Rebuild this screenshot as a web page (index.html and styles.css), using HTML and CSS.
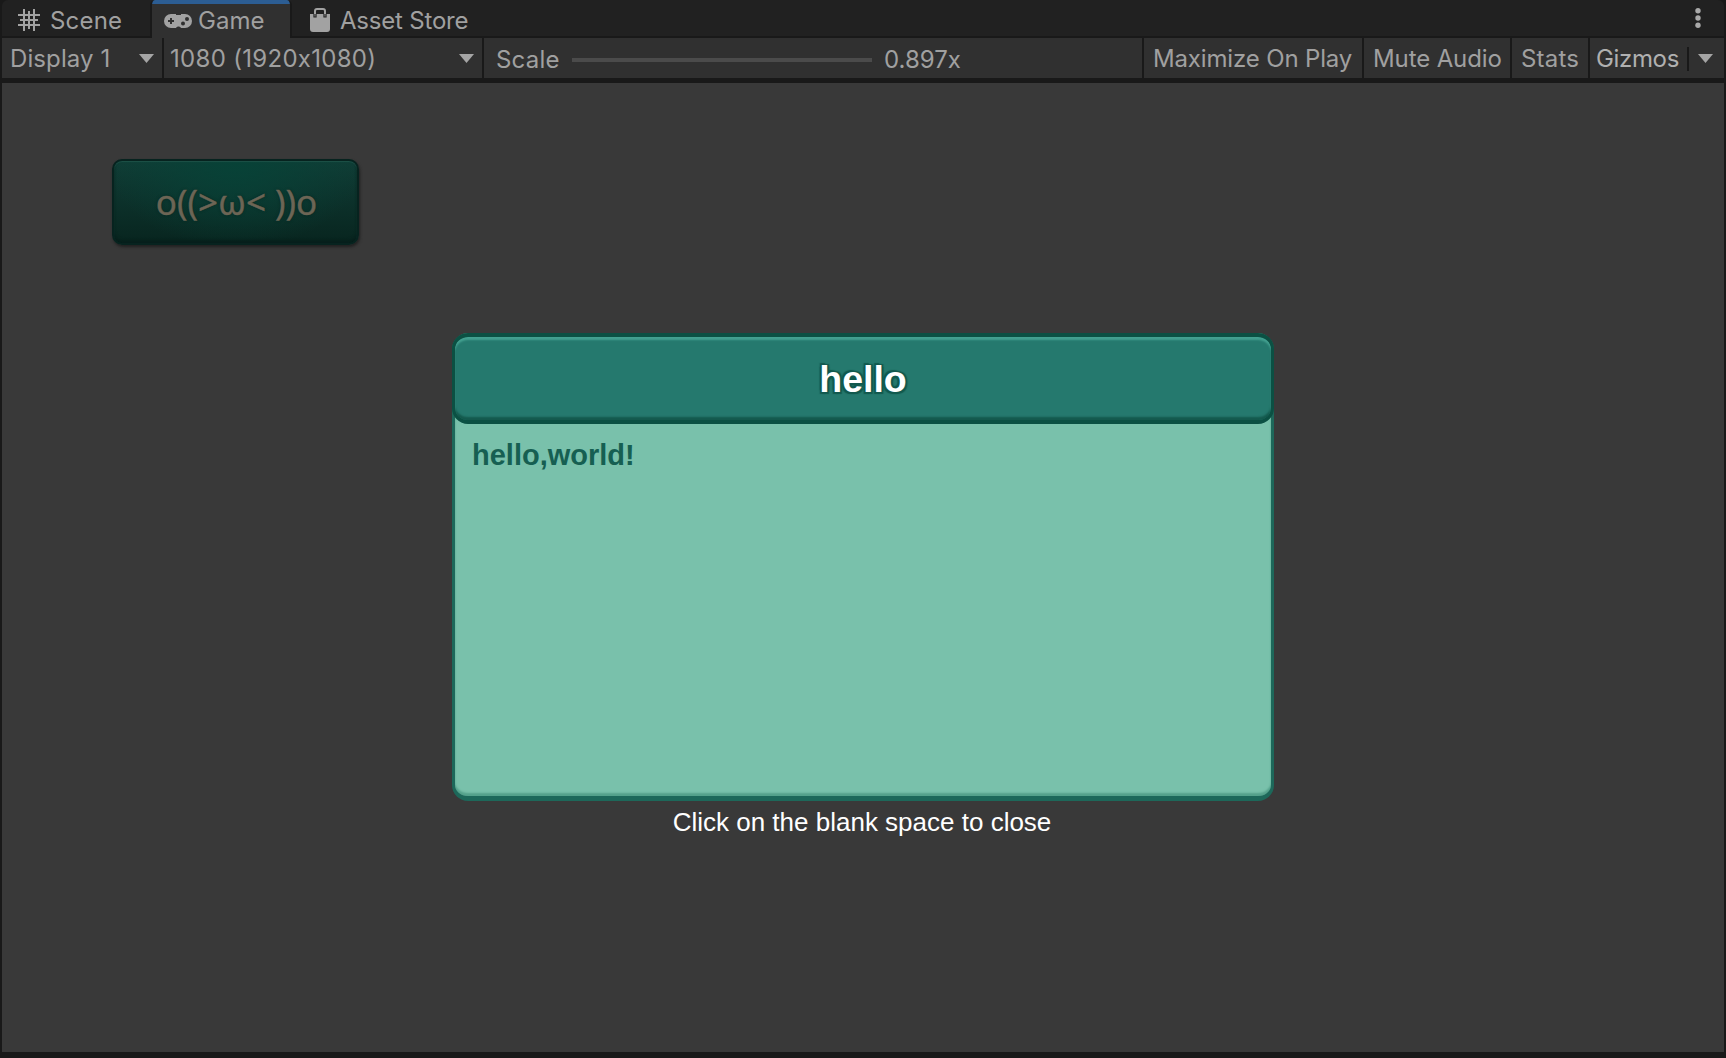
FILE: index.html
```html
<!DOCTYPE html>
<html lang="en">
<head>
<meta charset="utf-8">
<title>Game</title>
<link rel="stylesheet" href="styles.css">
</head>
<body>
<div class="editor">
  <nav class="tabs">
    <div class="tab scene">
      <svg class="icon" width="22" height="22" viewBox="0 0 22 22" fill="none" stroke="#a2a2a2" stroke-width="2"><path d="M6 0v22M11 2v18M16 0v22M0 6h22M2 11h18M0 16h22"/></svg>
      <span>Scene</span>
    </div>
    <div class="tab game active">
      <svg class="icon" width="28" height="14" viewBox="0 0 28 14"><rect width="28" height="14" rx="7" fill="#a2a2a2"/><path d="M12 0h5v1h-5zM12 14c1-2 4-2 5 0z" fill="#303030"/><path d="M7 4v6M4 7h6" stroke="#303030" stroke-width="2"/><circle cx="23" cy="5" r="2" fill="#303030"/><circle cx="19" cy="9.500" r="2" fill="#303030"/></svg>
      <span>Game</span>
    </div>
    <div class="tab store">
      <svg class="icon" width="20" height="24" viewBox="0 0 20 24"><path d="M0 6h20v15a3 3 0 0 1-3 3H3a3 3 0 0 1-3-3z" fill="#a2a2a2"/><path d="M5 6V3q0-2 2-2h6q2 0 2 2v3" fill="none" stroke="#a2a2a2" stroke-width="2"/><path d="M4 6v3h2V6M14 6v3h2V6" fill="none" stroke="#212121" stroke-width="1.200"/></svg>
      <span>Asset Store</span>
    </div>
    <svg class="more" width="6" height="20" viewBox="0 0 6 20" fill="#a9a9a9"><circle cx="3" cy="2.700" r="2.700"/><circle cx="3" cy="10" r="2.700"/><circle cx="3" cy="17.300" r="2.700"/></svg>
  </nav>
  <div class="toolbar">
    <div class="cell display"><span>Display 1</span><i class="arrow"></i></div>
    <div class="cell resolution"><span>1080 (1920x1080)</span><i class="arrow"></i></div>
    <div class="cell scale"><span class="label">Scale</span><i class="slider"></i><span class="value">0.897x</span></div>
    <div class="cell maximize"><span>Maximize On Play</span></div>
    <div class="cell mute"><span>Mute Audio</span></div>
    <div class="cell stats"><span>Stats</span></div>
    <div class="cell gizmos"><span>Gizmos</span><i class="divider"></i><i class="arrow"></i></div>
  </div>
  <main class="view">
    <button class="face">o((&gt;ω&lt; ))o</button>
    <section class="dialog">
      <h1 class="title">hello</h1>
      <p class="message">hello,world!</p>
    </section>
    <p class="hint">Click on the blank space to close</p>
  </main>
</div>
</body>
</html>
```
FILE: styles.css
```css
* { box-sizing: border-box; }
body {
  margin: 0;
  background: #191919;
  font: 400 24px/30px Inter, sans-serif;
  font-feature-settings: "calt" 0;
  color: #a0a0a0;
}
.editor {
  height: 1058px;
  padding: 0 2px 6px;
  display: flex;
  flex-direction: column;
  overflow: hidden;
}
span { white-space: nowrap; }
.tabs {
  height: 36px;
  display: flex;
  background: #212121;
  border-radius: 6px 6px 0 0;
}
.tab { display: flex; align-items: center; padding-top: 5px; }
.icon { flex: none; }
.scene { width: 148px; padding-left: 16px; gap: 10px; letter-spacing: 0.2px; }
.scene .icon { margin-top: -2px; }
.game { width: 142px; padding-left: 12px; gap: 6px; }
.active {
  height: 38px;
  background: #303030;
  border: solid #191919;
  border-width: 0 2px;
  background-image: linear-gradient(#2c5d93 4px, transparent 4px);
  border-radius: 5px 5px 0 0;
  padding-top: 6px;
  padding-bottom: 2px;
}
.store { padding-left: 18px; gap: 10px; letter-spacing: -0.2px; }
.store .icon { margin-top: -1px; }
.more { margin: 8px 23px 0 auto; }
.toolbar { height: 40px; margin-top: 2px; display: flex; background: #303030; flex: none; }
.cell {
  display: flex;
  align-items: center;
  padding-top: 2px;
  border-right: 2px solid #191919;
}
.arrow {
  width: 15px;
  height: 9px;
  margin-top: -1px;
  background: #a5a5a5;
  clip-path: polygon(0 0, 100% 0, 50% 100%);
}
.display { width: 162px; padding-right: 8px; padding-left: 8px; justify-content: space-between; letter-spacing: 0.1px; }
.resolution { width: 320px; padding-right: 8px; padding-left: 6px; justify-content: space-between; letter-spacing: 0.3px; }
.scale { width: 660px; padding-top: 3px; padding-left: 12px; }
.label { width: 76px; letter-spacing: 0.2px; }
.slider { width: 300px; height: 4px; background: #4b4b4b; }
.value { margin-left: 12px; }
.maximize { width: 220px; padding-left: 9px; letter-spacing: -0.15px; }
.mute { width: 148px; padding-left: 9px; letter-spacing: -0.12px; }
.stats { width: 78px; padding-left: 9px; letter-spacing: 0.2px; }
.gizmos { flex: 1; padding-left: 6px; border: 0; color: #b0b0b0; letter-spacing: -0.35px; }
.divider { width: 2px; height: 24px; margin: 0 9px 0 auto; background: #191919; }
.gizmos .arrow { margin-right: 11px; }
.view {
  height: 969px;
  margin-top: 5px;
  background: #393939;
  display: flex;
  flex-direction: column;
}
.face {
  width: 247px;
  height: 86px;
  margin: 76px 0 0 110px;
  padding: 0 0 1px 2px;
  border: 2px solid #07231f;
  border-radius: 10px;
  background: radial-gradient(ellipse at 50% 0, #074237, transparent 75%), linear-gradient(#103d36, #08251f);
  box-shadow: inset 0 1px 1px #1d5148, inset 0 -3px 3px #061f1b, 1px 2px 3px #202020;
  font: 35px/1 "Noto Sans", sans-serif;
  color: #6c6555;
  -webkit-text-stroke: 0.4px #6c6555;
  text-shadow: 0 0 3px #06251f;
}
.dialog {
  width: 822px;
  height: 468px;
  margin: 88px 0 0 450px;
  border: solid #1d685a;
  border-width: 0 3px 5px;
  border-radius: 16px;
  background: #79c1ab;
  box-shadow: inset 0 -3px 2px #54a18b;
}
.title {
  height: 91px;
  margin: 0 -3px;
  border: solid #0b5043;
  border-width: 4px 3px;
  border-radius: 16px;
  background: #25796e;
  box-shadow: inset 0 3px 2px #43a090, inset 0 -3px 2px #14594d;
  text-align: center;
  font: bold 37.500px/85px "Liberation Sans", sans-serif;
  color: #fff;
  text-shadow: 2px 2px 1px #12594e, -2px 2px 1px #12594e, 2px -1px 1px #12594e, -2px -2px 1px #12594e;
}
.message {
  margin: 14px 0 0 17px;
  font: bold 29px/34px "Liberation Sans", sans-serif;
  color: #165f52;
}
.hint {
  margin: 5px 2px 0 0;
  text-align: center;
  font: 26px/32px "Liberation Sans", sans-serif;
  color: #fff;
}
```
